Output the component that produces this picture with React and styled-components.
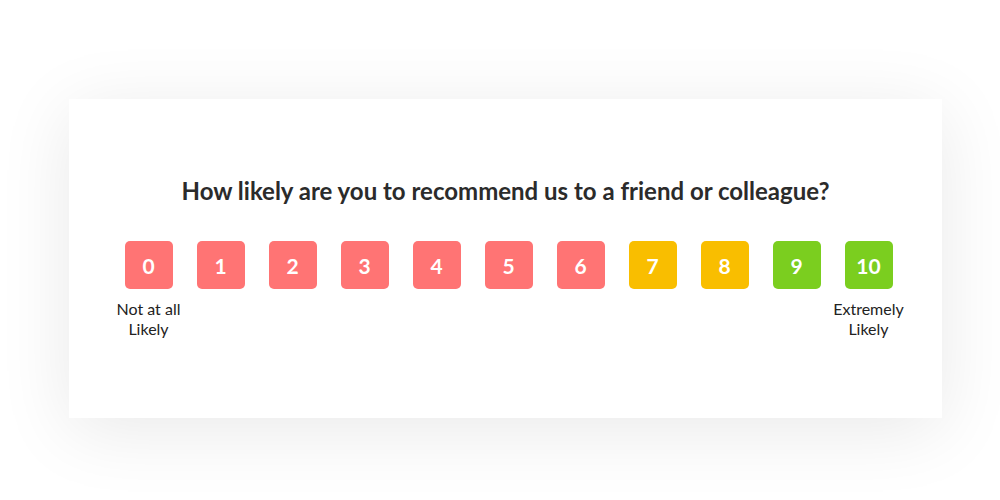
import React from "react";
import styled, { createGlobalStyle } from "styled-components";

const GlobalStyle = createGlobalStyle`
    body{
        margin:0;
        background-color:#fff;
        font-family:Lato, "Open Sans", sans-serif;
    }
`;

const Page = styled.div`
    width:1000px;
    height:500px;
    padding:99px 58px 0 69px;
    box-sizing:border-box;
    overflow:hidden;
`;

const Card = styled.div`
    height:319px;
    background-color:#fff;
    box-shadow:0 12px 70px rgba(0,0,0,0.09);
    padding-top:78px;
    box-sizing:border-box;
    display:flex;
    flex-direction:column;
    align-items:center;
`;

const Title = styled.h1`
    margin:0;
    font-size:24px;
    line-height:28px;
    font-weight:700;
    color:#2b2b2b;
`;

const Scale = styled.div`
    margin-top:36px;
    margin-left:6px;
    display:flex;
    gap:24px;
`;

const Column = styled.div`
    width:48px;
    display:flex;
    flex-direction:column;
    align-items:center;
`;

const colors = {
    red:'#ff7474',
    yellow:'#f9be00',
    green:'#7bce1f',
};

const Score = styled.button`
    width:48px;
    height:48px;
    border:none;
    border-radius:5px;
    padding:0;
    background-color:${p => colors[p.$tone]};
    color:#fff;
    font-family:Lato, sans-serif;
    font-size:21px;
    font-weight:700;
    cursor:pointer;
    display:flex;
    align-items:center;
    justify-content:center;
`;

const Label = styled.div`
    margin-top:10px;
    width:max-content;
    font-size:16px;
    line-height:20px;
    color:#222;
    text-align:center;
`;

function toneFor(n){
    if(n <= 6) return 'red';
    if(n <= 8) return 'yellow';
    return 'green';
}

export default function App(){
    let [picked,setPicked] = React.useState(null);
    const scores = [0,1,2,3,4,5,6,7,8,9,10];

    return <>
        <GlobalStyle/>
        <Page>
            <Card>
                <Title>How likely are you to recommend us to a friend or colleague?</Title>
                <Scale>
                    {scores.map(n => (
                        <Column key={n}>
                            <Score $tone={toneFor(n)} onClick={() => setPicked(n)} aria-pressed={picked === n}>{n}</Score>
                            {n === 0 && <Label>Not at all<br/>Likely</Label>}
                            {n === 10 && <Label>Extremely<br/>Likely</Label>}
                        </Column>
                    ))}
                </Scale>
            </Card>
        </Page>
    </>
}
